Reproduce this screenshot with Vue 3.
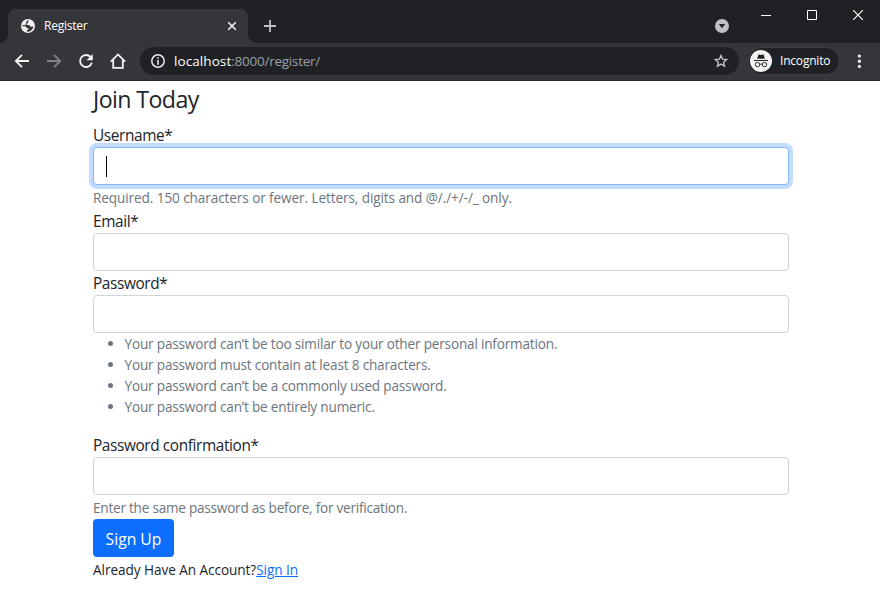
<script setup>
const rules = [
  'Your password can’t be too similar to your other personal information.',
  'Your password must contain at least 8 characters.',
  'Your password can’t be a commonly used password.',
  'Your password can’t be entirely numeric.',
]
</script>

<template>
  <div class="window">
    <header class="tabstrip">
      <div class="tab">
        <svg class="globe" width="14" height="14" viewBox="0 0 14 14">
          <circle cx="7" cy="7" r="7" fill="#f1f3f4" />
          <path d="M8.4 1.5 7 2.6 7.2 4 5.8 4.6 5.7 6l2.6.1.8 1.4 3.2-.1-.5 2.2L9.6 12l-2.2.8-1.6-.4.2-1.2 1.5-.6-.2-1.3-1.7-.4-.6-1.3-3.6-.4.1-1.2 2.5.2L5 4.7 5.2 3l1.3-1.5Z" fill="#35363a" />
        </svg>
        <span class="tab-title">Register</span>
        <svg class="close" width="10" height="10" viewBox="0 0 10 10"><path d="m1.2 1.2 7.6 7.6m0-7.6L1.2 8.8" stroke="#f1f3f4" stroke-width="1.6" /></svg>
      </div>
      <svg class="plus" width="12" height="12" viewBox="0 0 12 12"><path d="M6 0v12M0 6h12" stroke="#bdc1c6" stroke-width="1.8" /></svg>
      <svg class="search" width="14" height="14" viewBox="0 0 14 14"><circle cx="7" cy="7" r="7" fill="#bdc1c6" /><path d="M3.8 5h6.4L7 9.3Z" fill="#202124" /></svg>
      <div class="controls">
        <svg width="10" height="10" viewBox="0 0 10 10"><path d="M0 5.5h10" stroke="#fff" /></svg>
        <svg width="10" height="10" viewBox="0 0 10 10"><path d="M.5.5h9v9h-9Z" fill="none" stroke="#fff" /></svg>
        <svg width="10" height="10" viewBox="0 0 10 10"><path d="m0 0 10 10M10 0 0 10" stroke="#fff" stroke-width="1.2" /></svg>
      </div>
    </header>
    <div class="toolbar">
      <nav class="nav">
        <svg width="16" height="16" viewBox="0 0 16 16"><path d="M15 8H2.2M8 1.8 1.8 8 8 14.2" fill="none" stroke="#f1f3f4" stroke-width="1.8" /></svg>
        <svg width="16" height="16" viewBox="0 0 16 16"><path d="M1 8h12.8M8 1.8 14.2 8 8 14.2" fill="none" stroke="#838487" stroke-width="1.8" /></svg>
        <svg width="16" height="16" viewBox="0 0 16 16"><path d="M12.6 4A6 6 0 1 0 13.8 9.8" fill="none" stroke="#f1f3f4" stroke-width="1.9" /><path d="M14.8 1v6.2H8.6Z" fill="#f1f3f4" /></svg>
        <svg width="16" height="16" viewBox="0 0 16 16"><path d="M.8 8.6 8 1.4l7.2 7.2M3.2 7v7.9h9.6V7" fill="none" stroke="#f1f3f4" stroke-width="1.8" /></svg>
      </nav>
      <div class="omnibox">
        <svg width="14" height="14" viewBox="0 0 14 14"><circle cx="7" cy="7" r="6.2" fill="none" stroke="#e8eaed" stroke-width="1.5" /><path d="M7 3.2v1.6M7 6v4.7" stroke="#e8eaed" stroke-width="1.6" /></svg>
        <span class="url"><b>localhost</b>:8000/register/</span>
        <svg class="star" width="14" height="14" viewBox="0 0 14 14"><path d="m7 1.4 1.6 3.8 4.1.35-3.1 2.7.95 4L7 10.1l-3.55 2.15.95-4-3.1-2.7 4.1-.35Z" fill="none" stroke="#c4c7ca" stroke-width="1.3" /></svg>
      </div>
      <div class="incognito">
        <svg width="22" height="22" viewBox="0 0 22 22">
          <circle cx="11" cy="11" r="11" fill="#f1f3f4" />
          <path d="M7.2 8.8 8.4 4.5h1l1.6.5 1.6-.5h1l1.2 4.3ZM4 10h14v1H4Z" fill="#202124" />
          <g fill="none" stroke="#303134" stroke-width="1"><rect x="5.4" y="12.5" width="4.2" height="4.2" rx="1.7" /><rect x="12.4" y="12.5" width="4.2" height="4.2" rx="1.7" /><path d="M9.6 14.4q1.4-.8 2.8 0" /></g>
        </svg>
        <span>Incognito</span>
      </div>
      <svg class="menu" width="4" height="14" viewBox="0 0 4 14" fill="#f1f3f4"><circle cx="2.4" cy="2" r="1.6" /><circle cx="2.4" cy="7.2" r="1.6" /><circle cx="2.4" cy="12.4" r="1.6" /></svg>
    </div>
    <main class="page">
      <h1>Join Today</h1>
      <label>Username*</label>
      <div class="field focus"><i class="caret"></i></div>
      <p class="help charset">Required. 150 characters or fewer. Letters, digits and @/./+/-/_ only.</p>
      <label>Email*</label>
      <div class="field"></div>
      <label>Password*</label>
      <div class="field"></div>
      <ul>
        <li v-for="rule in rules" :key="rule">{{ rule }}</li>
      </ul>
      <label>Password confirmation*</label>
      <div class="field"></div>
      <p class="help">Enter the same password as before, for verification.</p>
      <button type="button">Sign Up</button>
      <p class="signin">Already Have An Account?<a>Sign In</a></p>
    </main>
  </div>
</template>

<style>
body { margin: 0; background: #fff; }
</style>

<style scoped>
* { box-sizing: border-box; }
svg { display: block; flex: none; }
.window { height: 604px; overflow: hidden; font-family: "Open Sans", "Noto Sans", sans-serif; color: #212529; background: #fff; }
.tabstrip { display: flex; height: 43px; padding-left: 8px; background: #202124; }
.tab { position: relative; display: flex; align-items: center; width: 240px; height: 34px; margin-top: 9px; padding: 0 11px 0 13px; border-radius: 8px 8px 0 0; background: #35363a; }
.tab::before, .tab::after { content: ""; position: absolute; bottom: 0; width: 8px; height: 8px; }
.tab::before { left: -8px; background: radial-gradient(circle at 0 0, transparent 7.5px, #35363a 8px); }
.tab::after { right: -8px; background: radial-gradient(circle at 100% 0, transparent 7.5px, #35363a 8px); }
.tab-title { margin-left: 9px; font-size: 12px; line-height: 16px; letter-spacing: -0.25px; color: #fff; }
.close { margin-left: auto; }
.plus { margin: 20px 0 0 16px; }
.search { margin: 19px 0 0 auto; }
.controls { display: flex; gap: 36px; margin: 10px 17px 0 32px; }
.toolbar { display: flex; align-items: center; height: 38px; padding: 0 19px 2px 14px; background: #35363a; border-bottom: 1px solid #28292b; }
.nav { display: flex; gap: 16px; }
.omnibox { display: flex; align-items: center; width: 599px; height: 28px; margin-left: 14px; padding: 0 11px; border-radius: 14px; background: #202124; }
.url { margin-left: 9px; font-size: 13.5px; line-height: 20px; letter-spacing: -0.25px; color: #9aa0a6; }
.url b { font-weight: 400; letter-spacing: 0.08px; color: #fff; }
.star { margin-left: auto; }
.incognito { display: flex; align-items: center; width: 92px; height: 28px; margin-left: 9px; padding-left: 1px; border: 1px solid #3c3d41; border-radius: 14px; background: #202124; }
.incognito span { margin-left: 8px; font-size: 12px; line-height: 16px; letter-spacing: -0.2px; color: #fff; white-space: nowrap; }
.menu { margin-left: auto; }
.page { display: flex; flex-direction: column; align-items: flex-start; width: 696px; margin-left: 93px; }
h1 { height: 42px; margin: 0; padding-top: 4px; font-size: 23.2px; line-height: 29px; font-weight: 400; letter-spacing: -0.6px; }
label { height: 24px; padding-top: 1px; font-size: 15.4px; line-height: 24px; letter-spacing: -0.39px; }
.field { display: flex; align-items: center; width: 696px; height: 38px; padding: 0 12px; border: 1px solid #ced4da; border-radius: 4px; background: #fff; }
.focus { border-color: #86b7fe; box-shadow: 0 0 0 4px #c2dbfe; }
.caret { width: 1px; height: 21px; background: #000; }
.help { height: 24px; margin: 0; padding-top: 2px; font-size: 13.6px; line-height: 21px; letter-spacing: -0.24px; color: #6c757d; }
.charset { letter-spacing: -0.1px; }
ul { height: 100px; margin: 0; padding: 0 0 0 31.5px; font-size: 13.6px; line-height: 21px; letter-spacing: -0.19px; color: #6c757d; }
button { height: 38px; width: 81px; padding: 1px 0 0; border: 0; border-radius: 4px; background: #0d6efd; color: #fff; font: 15.7px/24px "Open Sans", sans-serif; }
.signin { margin: 2px 0 0; font-size: 13.6px; line-height: 21px; letter-spacing: -0.06px; }
.signin a { color: #0d6efd; text-decoration: underline; }
</style>
